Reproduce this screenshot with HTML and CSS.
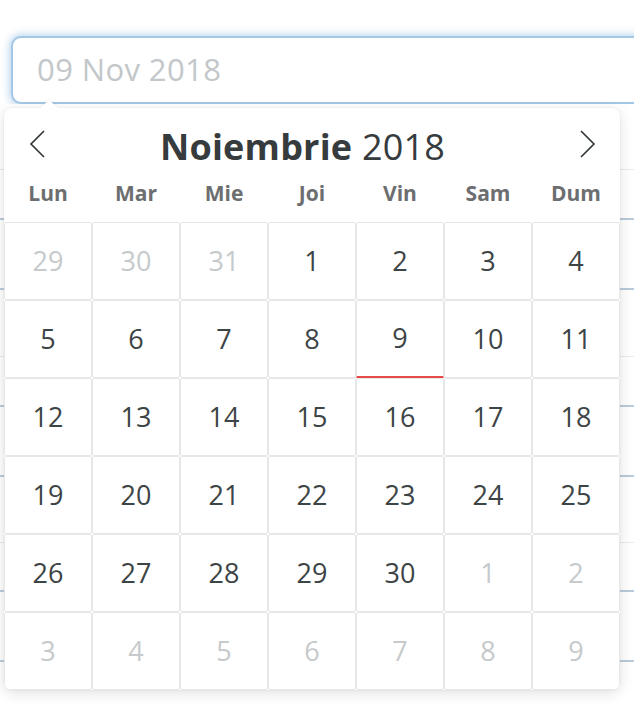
FILE: index.html
```html
<!DOCTYPE html>
<html lang="ro">
<head>
<meta charset="utf-8">
<title>Datepicker</title>
<link rel="stylesheet" href="styles.css">
</head>
<body>
<div class="page">
  <div class="field-wrap">
    <div class="field"><span class="placeholder">09 Nov 2018</span></div>
  </div>
  <div class="bg-lines">
    <div class="bg-row h66 light"></div>
    <div class="bg-row h50 blue"></div>
    <div class="bg-row h70 blue"></div>
    <div class="bg-row h67 light"></div>
    <div class="bg-row h50 blue"></div>
    <div class="bg-row h70 blue"></div>
    <div class="bg-row h66 light"></div>
    <div class="bg-row h49 blue"></div>
    <div class="bg-row h70 blue"></div>
  </div>

  <div class="picker">
    <div class="caret"></div>
    <div class="picker-head">
      <button class="nav" aria-label="Luna anterioară">
        <svg width="18" height="30" viewBox="0 0 18 30"><polyline points="15,2 2,15 15,28" fill="none" stroke="#2f3436" stroke-width="1.6"/></svg>
      </button>
      <div class="title"><strong>Noiembrie</strong> 2018</div>
      <button class="nav" aria-label="Luna următoare">
        <svg width="18" height="30" viewBox="0 0 18 30"><polyline points="3,2 16,15 3,28" fill="none" stroke="#2f3436" stroke-width="1.6"/></svg>
      </button>
    </div>
    <div class="weekdays">
      <span>Lun</span><span>Mar</span><span>Mie</span><span>Joi</span><span>Vin</span><span>Sam</span><span>Dum</span>
    </div>
    <div class="days">
      <div class="day other">29</div><div class="day other">30</div><div class="day other">31</div><div class="day">1</div><div class="day">2</div><div class="day">3</div><div class="day">4</div>
      <div class="day">5</div><div class="day">6</div><div class="day">7</div><div class="day">8</div><div class="day today">9</div><div class="day">10</div><div class="day">11</div>
      <div class="day">12</div><div class="day">13</div><div class="day">14</div><div class="day">15</div><div class="day">16</div><div class="day">17</div><div class="day">18</div>
      <div class="day">19</div><div class="day">20</div><div class="day">21</div><div class="day">22</div><div class="day">23</div><div class="day">24</div><div class="day">25</div>
      <div class="day">26</div><div class="day">27</div><div class="day">28</div><div class="day">29</div><div class="day">30</div><div class="day other">1</div><div class="day other">2</div>
      <div class="day other">3</div><div class="day other">4</div><div class="day other">5</div><div class="day other">6</div><div class="day other">7</div><div class="day other">8</div><div class="day other">9</div>
    </div>
  </div>
</div>
</body>
</html>
```

FILE: styles.css
```css
html, body {
  margin: 0;
  padding: 0;
  background: #ffffff;
  overflow: hidden;
}

.page {
  position: relative;
  width: 634px;
  height: 706px;
  overflow: hidden;
  font-family: "Open Sans", "Noto Sans", sans-serif;
}

.field-wrap {
  width: 634px;
  box-sizing: border-box;
  padding: 36px 0 0 11px;
  overflow: hidden;
  padding-bottom: 0;
}

.field {
  box-sizing: border-box;
  width: 640px;
  height: 68px;
  border: 2px solid #a3c7e6;
  border-radius: 10px;
  box-shadow: 0 0 7px 2px rgba(130, 180, 225, 0.5);
  background: #fff;
  padding-left: 24px;
  padding-bottom: 3px;
  display: flex;
  align-items: center;
}

.placeholder {
  font-size: 31px;
  color: #c3c7ca;
  letter-spacing: 0.4px;
}

.bg-lines {
  display: flex;
  flex-direction: column;
}

.bg-row {
  box-sizing: border-box;
}
.bg-row.light { border-bottom: 1px solid #e9ebed; }
.bg-row.blue { border-bottom: 2px solid #b9cadb; }
.h66 { height: 66px; }
.h50 { height: 50px; }
.h70 { height: 70px; }
.h67 { height: 67px; }
.h49 { height: 49px; }

.picker {
  position: absolute;
  left: 4px;
  top: 108px;
  width: 616px;
  height: 582px;
  background: #fff;
  border-radius: 8px;
  box-shadow: 0 3px 14px rgba(0, 0, 0, 0.12), 0 0 2px rgba(0, 0, 0, 0.08);
}

.caret {
  position: absolute;
  left: 36px;
  top: -8px;
  width: 0;
  height: 0;
  border-left: 9px solid transparent;
  border-right: 9px solid transparent;
  border-bottom: 8px solid #fff;
  filter: drop-shadow(0 -1px 1px rgba(0, 0, 0, 0.06));
}

.picker-head {
  box-sizing: border-box;
  height: 62px;
  display: flex;
  align-items: center;
  padding: 10px 24px 0 25px;
}

.nav {
  border: 0;
  background: none;
  padding: 0;
  margin: 0;
  width: 18px;
  height: 30px;
  display: flex;
  align-items: center;
  justify-content: center;
}

.title {
  flex: 1;
  text-align: center;
  font-size: 36px;
  color: #363b3d;
  padding-right: 20px;
  padding-top: 4px;
  letter-spacing: 0.2px;
}

.title strong {
  font-weight: 700;
}

.weekdays {
  height: 52px;
  display: grid;
  grid-template-columns: repeat(7, 88px);
  align-items: center;
  padding-bottom: 6px;
  box-sizing: border-box;
}

.weekdays span {
  text-align: center;
  font-size: 21px;
  font-weight: 700;
  color: #6c6e70;
}

.days {
  display: grid;
  grid-template-columns: repeat(7, 88px);
  grid-auto-rows: 78px;
  border-radius: 0 0 8px 8px;
  overflow: hidden;
}

.day {
  box-sizing: border-box;
  border: 1px solid #e6e7e8;
  border-radius: 2px;
  display: flex;
  align-items: center;
  justify-content: center;
  font-size: 27px;
  color: #3d4446;
  padding-bottom: 2px;
}

.day.other {
  color: #c6cacb;
}

.day.today {
  border-bottom: 2px solid #e84a4a;
  border-radius: 2px 2px 0 0;
}
```
